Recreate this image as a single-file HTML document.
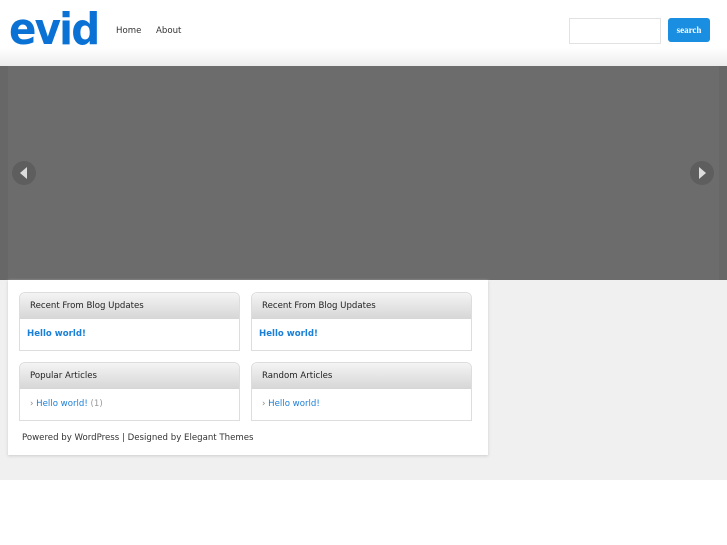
<!DOCTYPE html>
<html><head><style>
body{margin:0;width:727px;height:545px;background:#fff;font-family:"DejaVu Sans","Liberation Sans",sans-serif;position:relative;overflow:hidden}
.hdr{position:absolute;left:0;top:0;width:727px;height:66px;background:linear-gradient(#fff 0,#fff 48px,#ececec 66px)}
.logo{position:absolute;left:9px;top:4px;font:bold 44px "DejaVu Sans",sans-serif;color:#0a72d4;letter-spacing:-2px;transform:scaleX(0.92);transform-origin:left}
.nav{position:absolute;top:26px;font-size:8.6px;color:#333}
.sb{position:absolute;left:569px;top:18px;width:90px;height:24px;border:1px solid #e2e2e2;background:#fff}
.btn{position:absolute;left:668px;top:18px;width:42px;height:24px;background:#1a8ee0;border-radius:3px;color:#fff;font:bold 9px "Liberation Serif",serif;text-align:center;line-height:24px}
.slider{position:absolute;left:0;top:66px;width:727px;height:214px;background:#676767}
.slider .in{position:absolute;left:8px;top:0;width:711px;height:214px;background:#6c6c6c}
.arr{position:absolute;top:95px;width:24px;height:24px;border-radius:12px;background:#5e5e5e}
.grey{position:absolute;left:0;top:280px;width:727px;height:200px;background:#f0f0f0}
.main{position:absolute;left:8px;top:280px;width:480px;height:175px;background:#fff;box-shadow:0 1px 3px #ccc}
.box{position:absolute;width:219px;height:57px;border:1px solid #ddd;border-radius:6px 6px 0 0;background:#fff}
.box .t{height:26px;background:linear-gradient(#f4f4f4,#d6d6d6);border-radius:6px 6px 0 0;font-size:8.6px;color:#222;line-height:26px;padding-left:10px}
.box .c{padding:10px 7px;font-size:8.6px;color:#1a7fd6}
.ft{position:absolute;left:22px;top:433px;font-size:8.6px;color:#333}
</style></head><body>
<div class="hdr"></div>
<div class="logo">evid</div>
<div class="nav" style="left:116px">Home</div>
<div class="nav" style="left:156px">About</div>
<div class="sb"></div><div class="btn">search</div>
<div class="slider"><div class="in"></div>
<div class="arr" style="left:12px"><span style="position:absolute;left:8px;top:6px;border:6px solid transparent;border-right:7px solid #ddd;border-left:0"></span></div>
<div class="arr" style="left:690px"><span style="position:absolute;left:9px;top:6px;border:6px solid transparent;border-left:7px solid #ddd;border-right:0"></span></div>
</div>
<div class="grey"></div>
<div class="main"></div>
<div class="box" style="left:19px;top:292px"><div class="t">Recent From Blog Updates</div><div class="c"><b>Hello world!</b></div></div>
<div class="box" style="left:251px;top:292px"><div class="t">Recent From Blog Updates</div><div class="c"><b>Hello world!</b></div></div>
<div class="box" style="left:19px;top:362px"><div class="t">Popular Articles</div><div class="c" style="padding-left:10px"><span style="color:#888">›</span> Hello world! <span style="color:#999">(1)</span></div></div>
<div class="box" style="left:251px;top:362px"><div class="t">Random Articles</div><div class="c" style="padding-left:10px"><span style="color:#888">›</span> Hello world!</div></div>
<div class="ft">Powered by WordPress | Designed by Elegant Themes</div>
</body></html>
